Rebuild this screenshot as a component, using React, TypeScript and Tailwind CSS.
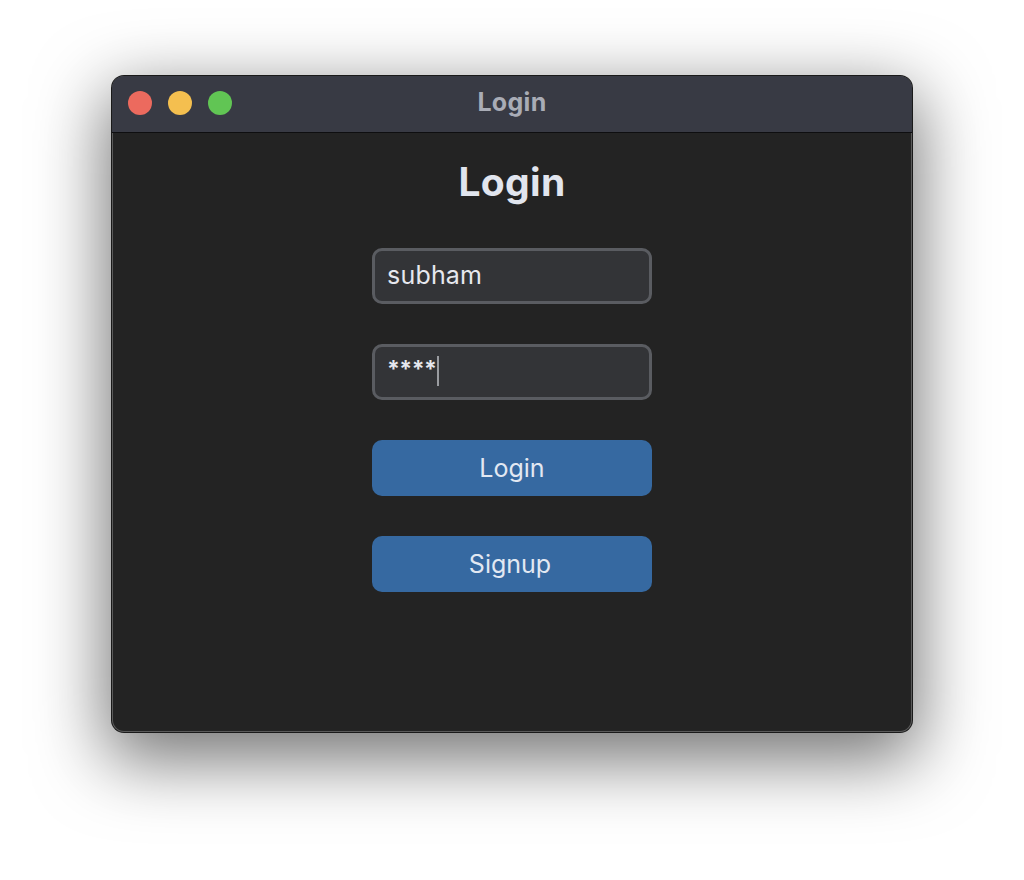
import React from "react";

export default function App() {
  return (
    <div
      className="w-[1024px] h-[880px] bg-white pt-[76px] pl-[112px]"
      style={{ fontFamily: "Inter, 'Noto Sans', sans-serif" }}
    >
      <div className="w-[800px] h-[656px] rounded-[12px] overflow-hidden flex flex-col bg-[#232323] shadow-[0_0_0_1px_#1a1a1a,inset_0_0_0_1px_#5a5a5a,0_22px_70px_6px_rgba(0,0,0,0.55)]">
        <div className="relative h-[57px] shrink-0 bg-[#383a44] border-b border-[#0e0e10] flex items-center justify-center">
          <div className="absolute left-[16px] top-[15px] flex gap-[16px]">
            <div className="w-[24px] h-[24px] rounded-full bg-[#ec6a5e]" />
            <div className="w-[24px] h-[24px] rounded-full bg-[#f4bf4f]" />
            <div className="w-[24px] h-[24px] rounded-full bg-[#61c554]" />
          </div>
          <span className="text-[25px] font-bold text-[#a9acb6] leading-none -mt-[3px] tracking-[0.3px]">Login</span>
        </div>
        <div className="flex flex-col items-center pt-[25px]">
          <h1 className="text-[39px] font-bold text-[#e1e5ee] leading-[48px] mb-[42px] tracking-[0.3px]">Login</h1>
          <div className="flex flex-col gap-[40px] w-[280px]">
            <div className="h-[56px] rounded-[10px] border-[3px] border-[#5a5c61] bg-[#333437] flex items-center px-[12px]">
              <span className="text-[25px] text-[#e6e8ee] leading-none -mt-[1px] tracking-[0.2px]">subham</span>
            </div>
            <div className="h-[56px] rounded-[10px] border-[3px] border-[#5a5c61] bg-[#333437] flex items-center px-[12px]">
              <span className="text-[23px] font-bold text-[#e6e8ee] leading-none -mt-[5px] tracking-[-0.5px]">****</span>
              <div className="w-[2px] h-[30px] bg-[#9a9ca0] ml-[1px] -mt-[2px]" />
            </div>
            <button className="h-[56px] rounded-[10px] bg-[#3669a1] text-[25px] text-[#e2e8f2] flex items-center justify-center">
              <span className="mt-[1px]">Login</span>
            </button>
            <button className="h-[56px] rounded-[10px] bg-[#3669a1] text-[25px] text-[#e2e8f2] flex items-center justify-center">
              <span className="mt-[1px] -ml-[4px]">Signup</span>
            </button>
          </div>
        </div>
      </div>
    </div>
  );
}
